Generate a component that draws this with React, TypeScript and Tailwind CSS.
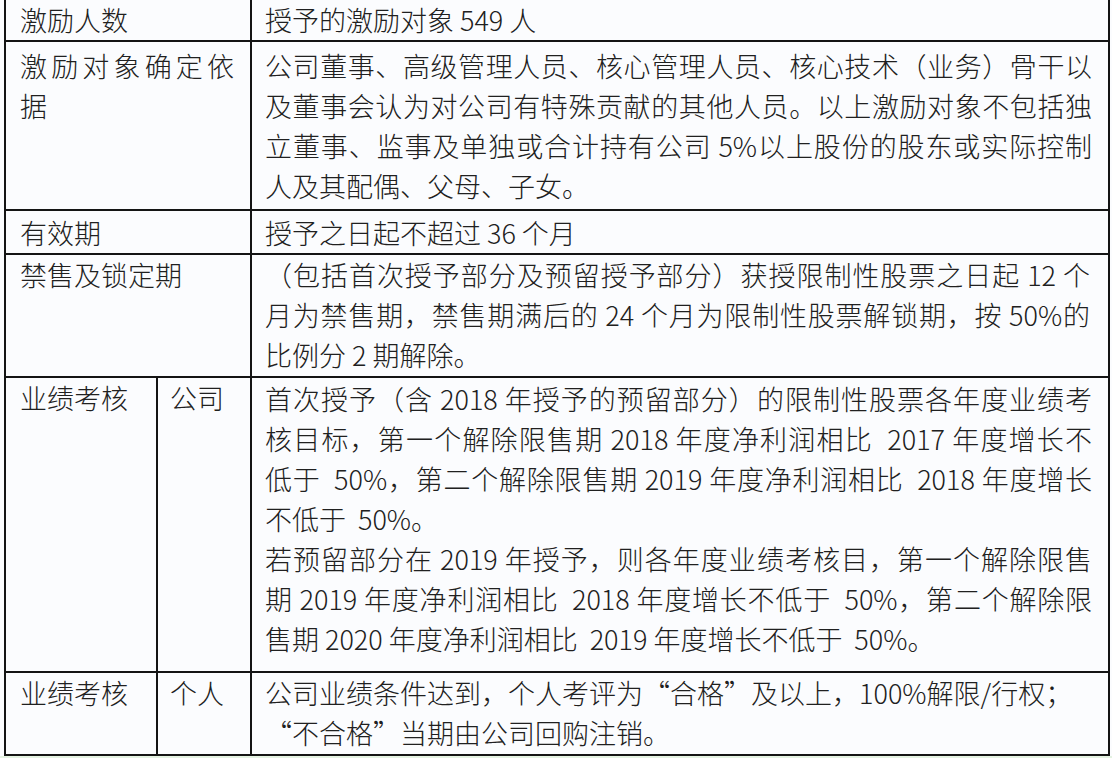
const FONT = "font-['Noto_Sans_CJK_SC','Noto_Sans',sans-serif]";

function Line({ text, justify = false }: { text: string; justify?: boolean }) {
  return (
    <div
      className={
        "whitespace-pre " + (justify ? "text-justify [text-align-last:justify]" : "")
      }
    >
      {text}
    </div>
  );
}

function Cell({
  lines,
  full = [],
  className = "",
}: {
  lines: string[];
  full?: number[];
  className?: string;
}) {
  return (
    <div className={className}>
      {lines.map((l, i) => (
        <Line key={i} text={l} justify={full.includes(i)} />
      ))}
    </div>
  );
}

export default function App() {
  return (
    <div
      className={`${FONT} w-[1112px] h-[758px] bg-[#e4f2e2] flex flex-col overflow-hidden text-[27px] leading-[40px] font-light text-[#202020]`}
    >
      <div className="bg-[#fbfcfe] pl-[4px] pr-[2px]">
        <div className="w-[1106px] border-x-2 border-b-2 border-[#141414]">
          {/* 激励人数 */}
          <div className="grid grid-cols-[246px_1fr] h-[42px] border-b-2 border-[#141414]">
            <Cell className="border-r-2 border-[#141414] pl-[14px]" lines={["激励人数"]} />
            <Cell className="pl-[13px]" lines={["授予的激励对象 549 人"]} />
          </div>

          {/* 激励对象确定依据 */}
          <div className="grid grid-cols-[246px_1fr] h-[169px] border-b-2 border-[#141414]">
            <Cell
              className="border-r-2 border-[#141414] pl-[14px] pr-[16px] pt-[4px]"
              lines={["激励对象确定依", "据"]}
              full={[0]}
            />
            <Cell
              className="pl-[13px] pr-[16px] pt-[4px]"
              lines={[
                "公司董事、高级管理人员、核心管理人员、核心技术（业务）骨干以",
                "及董事会认为对公司有特殊贡献的其他人员。以上激励对象不包括独",
                "立董事、监事及单独或合计持有公司 5%以上股份的股东或实际控制",
                "人及其配偶、父母、子女。",
              ]}
              full={[0, 1, 2]}
            />
          </div>

          {/* 有效期 */}
          <div className="grid grid-cols-[246px_1fr] h-[44px] border-b-2 border-[#141414]">
            <Cell className="border-r-2 border-[#141414] pl-[14px] pt-[2px]" lines={["有效期"]} />
            <Cell className="pl-[13px] pt-[2px]" lines={["授予之日起不超过 36 个月"]} />
          </div>

          {/* 禁售及锁定期 */}
          <div className="grid grid-cols-[246px_1fr] h-[123px] border-b-2 border-[#141414]">
            <Cell className="border-r-2 border-[#141414] pl-[14px]" lines={["禁售及锁定期"]} />
            <Cell
              className="pl-[13px] pr-[18px]"
              lines={[
                "（包括首次授予部分及预留授予部分）获授限制性股票之日起 12 个",
                "月为禁售期，禁售期满后的 24 个月为限制性股票解锁期，按 50%的",
                "比例分 2 期解除。",
              ]}
              full={[0, 1]}
            />
          </div>

          {/* 业绩考核 公司 */}
          <div className="grid grid-cols-[152px_94px_1fr] h-[295px] border-b-2 border-[#141414]">
            <Cell className="border-r-2 border-[#141414] pl-[14px]" lines={["业绩考核"]} />
            <Cell className="border-r-2 border-[#141414] pl-[12px]" lines={["公司"]} />
            <Cell
              className="pl-[13px] pr-[16px] pt-px"
              lines={[
                "首次授予（含 2018 年授予的预留部分）的限制性股票各年度业绩考",
                "核目标，第一个解除限售期 2018 年度净利润相比  2017 年度增长不",
                "低于  50%，第二个解除限售期 2019 年度净利润相比  2018 年度增长",
                "不低于  50%。",
                "若预留部分在 2019 年授予，则各年度业绩考核目，第一个解除限售",
                "期 2019 年度净利润相比  2018 年度增长不低于  50%，第二个解除限",
                "售期 2020 年度净利润相比  2019 年度增长不低于  50%。",
              ]}
              full={[0, 1, 2, 4, 5]}
            />
          </div>

          {/* 业绩考核 个人 */}
          <div className="grid grid-cols-[152px_94px_1fr] h-[81px]">
            <Cell className="border-r-2 border-[#141414] pl-[14px]" lines={["业绩考核"]} />
            <Cell className="border-r-2 border-[#141414] pl-[12px]" lines={["个人"]} />
            <Cell
              className="pl-[13px]"
              lines={[
                "公司业绩条件达到，个人考评为“合格”及以上，100%解限/行权；",
                "“不合格”当期由公司回购注销。",
              ]}
            />
          </div>
        </div>
      </div>
      <div className="flex-1" />
    </div>
  );
}
